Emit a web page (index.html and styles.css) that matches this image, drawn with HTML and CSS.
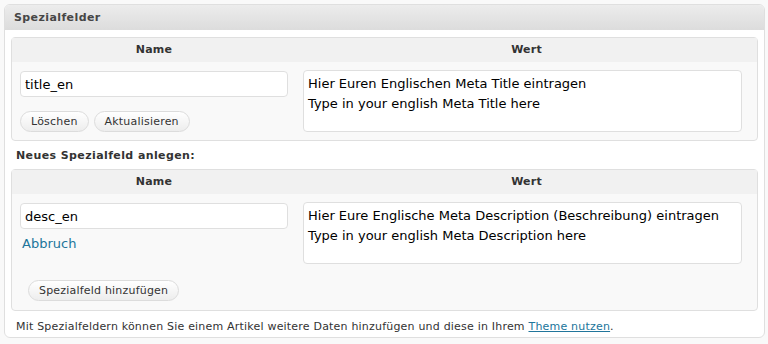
FILE: index.html
```html
<!doctype html>
<html lang="de">
<head>
  <meta charset="utf-8">
  <title>Spezialfelder</title>
  <link rel="stylesheet" href="styles.css">
</head>
<body>
  <div class="postbox">
    <h3 class="box-title">Spezialfelder</h3>
    <div class="inside">
      <div class="meta-table">
        <div class="meta-head">
          <div class="col-name">Name</div>
          <div class="col-value">Wert</div>
        </div>
        <div class="meta-row">
          <div class="col-name">
            <input class="field" type="text" value="title_en">
            <div class="btn-row">
              <button class="button">Löschen</button>
              <button class="button">Aktualisieren</button>
            </div>
          </div>
          <div class="col-value">
            <textarea class="area">Hier Euren Englischen Meta Title eintragen
Type in your english Meta Title here</textarea>
          </div>
        </div>
      </div>

      <p class="new-title">Neues Spezialfeld anlegen:</p>

      <div class="meta-table">
        <div class="meta-head">
          <div class="col-name">Name</div>
          <div class="col-value">Wert</div>
        </div>
        <div class="meta-row">
          <div class="col-name">
            <input class="field" type="text" value="desc_en">
            <a class="cancel" href="#">Abbruch</a>
          </div>
          <div class="col-value">
            <textarea class="area">Hier Eure Englische Meta Description (Beschreibung) eintragen
Type in your english Meta Description here</textarea>
          </div>
        </div>
        <div class="add-row">
          <button class="button">Spezialfeld hinzufügen</button>
        </div>
      </div>

      <p class="hint">Mit Spezialfeldern können Sie einem Artikel weitere Daten hinzufügen und diese in Ihrem <a href="#">Theme nutzen</a>.</p>
    </div>
  </div>
</body>
</html>
```

FILE: styles.css
```css
/* Grundlagen */
* {
  box-sizing: border-box;
}
body {
  margin: 0;
  padding: 4px;
  background: #f9f9f9;
  font-family: "DejaVu Sans", Verdana, sans-serif;
  font-size: 11px;
  letter-spacing: .2px;
  color: #333;
}

/* Kasten */
.postbox {
  width: 761px;
  height: 334px;
  background: #fff;
  border: 1px solid #dfdfdf;
  border-radius: 6px;
  overflow: hidden;
}
.box-title {
  margin: 0;
  height: 25px;
  padding: 0 9px;
  line-height: 25px;
  font-size: 11px;
  font-weight: bold;
  letter-spacing: .4px;
  color: #464646;
  background: linear-gradient(#ececec, #dcdcdc);
}
.inside {
  padding: 7px 6px 0;
}

/* Tabellen */
.meta-table {
  background: #f9f9f9;
  border: 1px solid #dfdfdf;
  border-radius: 4px;
}
.meta-head, .meta-row {
  display: grid;
  grid-template-columns: 284px 1fr;
}
.meta-head {
  height: 24px;
  line-height: 24px;
  background: #f1f1f1;
  text-align: center;
  font-weight: bold;
  color: #333;
}
.meta-row .col-name {
  padding: 9px 7px 0 8px;
}
.meta-row .col-value {
  padding: 8px 15px 8px 7px;
}
.field {
  display: block;
  width: 268px;
  height: 26px;
  margin: 0;
  padding: 0 4px;
  border: 1px solid #dfdfdf;
  border-radius: 4px;
  background: #fff;
  font: 13px "DejaVu Sans", Verdana, sans-serif;
  color: #000;
}
.area {
  display: block;
  width: 100%;
  height: 62px;
  margin: 0;
  padding: 3px 4px;
  border: 1px solid #dfdfdf;
  border-radius: 4px;
  background: #fff;
  resize: none;
  font: 13px/20px "DejaVu Sans", Verdana, sans-serif;
  color: #000;
}
.btn-row {
  display: flex;
  gap: 5px;
  margin-top: 14px;
}
.button {
  height: 21px;
  padding: 0 10px;
  border: 1px solid #dcdcdc;
  border-radius: 11px;
  background: linear-gradient(#fff, #ededed);
  font: 11px "DejaVu Sans", Verdana, sans-serif;
  letter-spacing: .2px;
  color: #333;
  cursor: pointer;
}
.cancel {
  display: block;
  margin: 7px 0 0 2px;
  font-size: 13px;
  letter-spacing: 0;
  color: #21759b;
  text-decoration: none;
}
.add-row {
  padding: 8px 16px 9px;
}

.new-title {
  margin: 0;
  height: 28px;
  padding: 8px 0 0 5px;
  font-weight: bold;
  letter-spacing: .4px;
  color: #333;
}
.hint {
  margin: 0;
  padding: 9px 0 0 5px;
  color: #333;
}
.hint a {
  color: #21759b;
}
```
